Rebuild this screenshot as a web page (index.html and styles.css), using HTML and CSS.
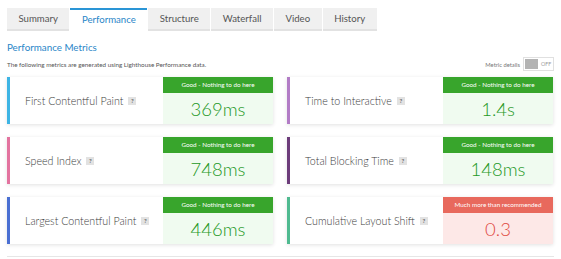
FILE: index.html
```html
<!DOCTYPE html>
<html>
<head>
<meta charset="utf-8">
<link rel="stylesheet" href="styles.css">
</head>
<body>
<nav class="tabs">
  <div class="tab">Summary</div>
  <div class="tab active">Performance</div>
  <div class="tab">Structure</div>
  <div class="tab">Waterfall</div>
  <div class="tab">Video</div>
  <div class="tab">History</div>
</nav>
<section class="intro">
  <h1 class="heading">Performance Metrics</h1>
  <div class="subrow">
    <p class="sub">The following metrics are generated using Lighthouse Performance data.</p>
    <div class="toggle-wrap">
      <span class="toggle-label">Metric details</span>
      <span class="toggle"><span class="knob"></span><span class="off">OFF</span></span>
    </div>
  </div>
</section>
<section class="grid">
  <div class="card c-fcp">
    <div class="title">First Contentful Paint <span class="q">?</span></div>
    <div class="status good"><div class="label">Good - Nothing to do here</div><div class="value">369ms</div></div>
  </div>
  <div class="card c-tti">
    <div class="title">Time to Interactive <span class="q">?</span></div>
    <div class="status good"><div class="label">Good - Nothing to do here</div><div class="value">1.4s</div></div>
  </div>
  <div class="card c-si">
    <div class="title">Speed Index <span class="q">?</span></div>
    <div class="status good"><div class="label">Good - Nothing to do here</div><div class="value">748ms</div></div>
  </div>
  <div class="card c-tbt">
    <div class="title">Total Blocking Time <span class="q">?</span></div>
    <div class="status good"><div class="label">Good - Nothing to do here</div><div class="value">148ms</div></div>
  </div>
  <div class="card c-lcp">
    <div class="title">Largest Contentful Paint <span class="q">?</span></div>
    <div class="status good"><div class="label">Good - Nothing to do here</div><div class="value">446ms</div></div>
  </div>
  <div class="card c-cls">
    <div class="title">Cumulative Layout Shift <span class="q">?</span></div>
    <div class="status bad"><div class="label">Much more than recommended</div><div class="value">0.3</div></div>
  </div>
</section>
<hr class="rule">
</body>
</html>
```
FILE: styles.css
```css
html, body {
  margin: 0;
  padding: 0;
  background: #fff;
  font-family: Lato, "Open Sans", sans-serif;
}
.tabs {
  display: flex;
  margin: 8px 0 0 7px;
  height: 23px;
}
.tab {
  box-sizing: border-box;
  height: 23px;
  padding: 0 11.5px;
  margin-right: 1px;
  background: #f0f0f0;
  border-bottom: 2px solid #e2e2e2;
  color: #555;
  font-size: 9.6px;
  line-height: 22px;
}
.tab.active {
  background: #fff;
  border-top: 2px solid #2a95d6;
  border-bottom: none;
  color: #2a86c8;
  line-height: 20px;
}
.intro {
  margin: 0 7px;
  padding-top: 10px;
}
.heading {
  margin: 0;
  font-size: 9.8px;
  font-weight: normal;
  color: #2a86c8;
  line-height: 13px;
}
.subrow {
  display: flex;
  justify-content: space-between;
  align-items: center;
  height: 16px;
  margin-top: 2px;
}
.sub {
  margin: 0;
  font-size: 6.3px;
  color: #555;
}
.toggle-wrap {
  display: flex;
  align-items: center;
  gap: 3px;
}
.toggle-label {
  font-size: 5.8px;
  color: #777;
}
.toggle {
  display: flex;
  align-items: center;
  box-sizing: border-box;
  width: 31px;
  height: 14px;
  border: 1px solid #e0e0e0;
  padding: 1px;
}
.knob {
  width: 13px;
  height: 10px;
  background: #b3b3b3;
}
.off {
  font-size: 5.3px;
  color: #999;
  margin-left: 3px;
}
.grid {
  display: grid;
  grid-template-columns: 266px 266px;
  column-gap: 14px;
  row-gap: 13px;
  margin: 5px 7px 0 7px;
}
.card {
  display: flex;
  height: 47px;
  background: #fff;
  box-shadow: 0 1px 4px rgba(0, 0, 0, 0.12);
  border-left: 3px solid #3fb3e3;
}
.c-fcp { border-left-color: #3db4e4; }
.c-tti { border-left-color: #b27cc6; }
.c-si { border-left-color: #e3739f; }
.c-tbt { border-left-color: #6c3c7a; }
.c-lcp { border-left-color: #4a6fd2; }
.c-cls { border-left-color: #4fba90; }
.title {
  flex: 1;
  display: flex;
  align-items: center;
  padding-left: 15px;
  font-size: 10.7px;
  font-weight: 300;
  color: #3c3c3c;
}
.q {
  display: inline-block;
  width: 8px;
  height: 8px;
  margin-left: 5px;
  background: #e2e2e2;
  color: #666;
  font-size: 6px;
  line-height: 8px;
  text-align: center;
  font-weight: bold;
}
.status {
  width: 110px;
  display: flex;
  flex-direction: column;
}
.label {
  height: 16px;
  line-height: 16px;
  text-align: center;
  color: #fff;
  font-size: 6.3px;
}
.value {
  flex: 1;
  display: flex;
  align-items: center;
  justify-content: center;
  font-size: 18.5px;
  font-weight: 300;
}
.good .label { background: #38a52c; }
.good .value { background: #f0fbf0; color: #24981f; }
.bad .label { background: #e8695d; }
.bad .value { background: #fde8e7; color: #e0493f; }
.rule {
  margin: 12px 7px 0 7px;
  border: none;
  border-top: 1px solid #e6e6e6;
  height: 0;
}
```
